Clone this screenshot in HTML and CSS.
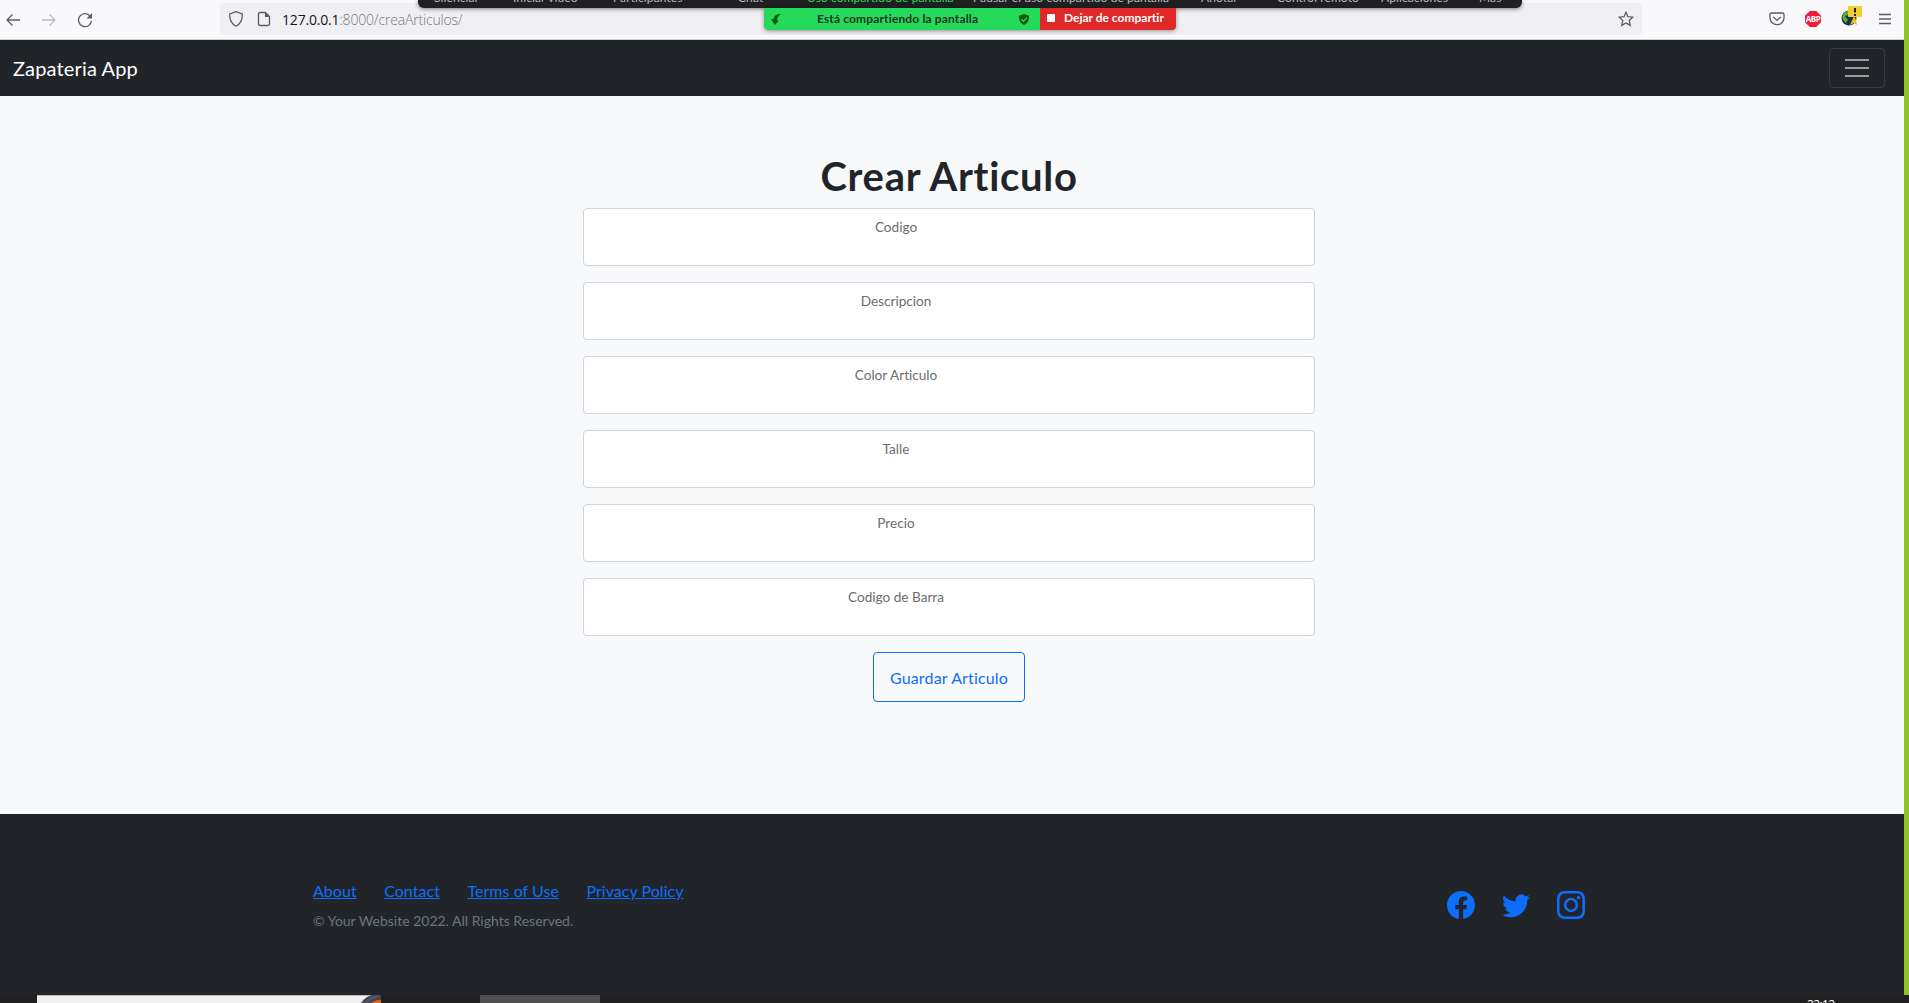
FILE: index.html
```html
<!DOCTYPE html>
<html lang="es">
<head>
<meta charset="utf-8">
<title>Zapateria App</title>
<link rel="stylesheet" href="styles.css">
</head>
<body>
<div class="screen">
  <div class="window">
    <header class="toolbar">
      <div class="nav-icons">
        <svg width="16" height="16" viewBox="0 0 16 16"><path d="M15 8H2M7.500 2.500L2 8l5.500 5.500"/></svg>
        <svg class="disabled" width="16" height="16" viewBox="0 0 16 16"><path d="M1 8h13M8.500 2.500L14 8l-5.500 5.500"/></svg>
        <svg width="16" height="16" viewBox="0 0 16 16"><path d="M13.300 4.300A6.500 6.500 0 1 0 14.500 8.800"/><path class="solid" d="M15 1v5.500H9.500z"/></svg>
      </div>
      <div class="urlbar">
        <svg width="16" height="18" viewBox="0 0 16 18"><path d="M8 1.700L14.300 4c.3 5.500-1.700 9.700-6.300 12.300C3.400 13.700 1.400 9.500 1.700 4z"/></svg>
        <svg class="page-icon" width="14" height="16" viewBox="0 0 14 16"><path d="M2.500 1.500h6l4 4v7.500q0 1.500-1.500 1.500H3q-1.500 0-1.500-1.500v-10q0-1.500 1.500-1.500z"/><path class="solid" d="M8 1.500l4.500 4.500H8z"/></svg>
        <span class="url"><b>127.0.0.1</b>:8000/creaArticulos/</span>
        <svg class="star" width="16" height="16" viewBox="0 0 16 16"><path d="M8 1.200l2 4.500 4.900.5-3.700 3.300 1.100 4.900L8 11.900l-4.300 2.500 1.100-4.900L1.100 6.200 6 5.700z"/></svg>
      </div>
      <div class="extensions">
        <svg width="16" height="16" viewBox="0 0 16 16"><path d="M2.500 2h11q1.500 0 1.500 1.500V7A7 6.700 0 0 1 1 7V3.500Q1 2 2.500 2zM4.300 6L8 9.400 11.700 6"/></svg>
        <span class="abp">ABP</span>
        <svg class="globe" width="21" height="21" viewBox="0 0 21 21"><circle cx="8" cy="12" r="7.500" fill="#14334a"/><path d="M2 8q4-4 7-3l-2 4-3 1 3 4-2 3q-5-4-3-9z" fill="#67a53a"/><path d="M9 19l4-9 2 4 1 5-3-2z" fill="#f5b821"/><rect x="7" width="14" height="11" rx="1" fill="#f2d02c"/><path d="M14 2v4.500M14 8v2" stroke="#222" stroke-width="2"/></svg>
        <svg width="14" height="14" viewBox="0 0 14 14"><path d="M1 2.500h12M1 7h12M1 11.500h12"/></svg>
      </div>
    </header>

    <nav class="navbar">
      <a class="brand">Zapateria App</a>
      <button class="toggler"><svg width="30" height="30" viewBox="0 0 30 30"><path d="M3 7h24M3 15h24M3 23h24"/></svg></button>
    </nav>

    <main class="content">
      <h1>Crear Articulo</h1>
      <form class="form">
        <div class="field"><label>Codigo</label></div>
        <div class="field"><label>Descripcion</label></div>
        <div class="field"><label>Color Articulo</label></div>
        <div class="field"><label>Talle</label></div>
        <div class="field"><label>Precio</label></div>
        <div class="field"><label>Codigo de Barra</label></div>
        <button class="save" type="button">Guardar Articulo</button>
      </form>
    </main>

    <footer class="footer">
      <div>
        <div class="links"><a>About</a><a>Contact</a><a>Terms of Use</a><a>Privacy Policy</a></div>
        <p class="copyright">© Your Website 2022. All Rights Reserved.</p>
      </div>
      <div class="social">
        <svg viewBox="0 0 16 16"><path d="M16 8.049c0-4.446-3.582-8.050-8-8.050C3.580 0-.002 3.603-.002 8.050c0 4.017 2.926 7.347 6.750 7.951v-5.625h-2.030V8.050H6.750V6.275c0-2.017 1.195-3.131 3.022-3.131.876 0 1.791.157 1.791.157v1.980h-1.009c-.993 0-1.303.621-1.303 1.258v1.510h2.218l-.354 2.326H9.250V16c3.824-.604 6.750-3.934 6.750-7.951z"/></svg>
        <svg viewBox="0 0 16 16"><path d="M5.026 15c6.038 0 9.341-5.003 9.341-9.334 0-.140 0-.282-.006-.422A6.685 6.685 0 0 0 16 3.542a6.658 6.658 0 0 1-1.889.518 3.301 3.301 0 0 0 1.447-1.817 6.533 6.533 0 0 1-2.087.793A3.286 3.286 0 0 0 7.875 6.030a9.325 9.325 0 0 1-6.767-3.429 3.289 3.289 0 0 0 1.018 4.382A3.323 3.323 0 0 1 .640 6.575v.045a3.288 3.288 0 0 0 2.632 3.218 3.203 3.203 0 0 1-.865.115 3.230 3.230 0 0 1-.614-.057 3.283 3.283 0 0 0 3.067 2.277A6.588 6.588 0 0 1 .780 13.580a6.320 6.320 0 0 1-.780-.045A9.344 9.344 0 0 0 5.026 15z"/></svg>
        <svg viewBox="0 0 16 16"><path fill-rule="evenodd" d="M4.700 0h6.600Q16 0 16 4.700v6.600Q16 16 11.300 16H4.700Q0 16 0 11.300V4.700Q0 0 4.700 0zM4.700 1.450Q1.450 1.450 1.450 4.700v6.600q0 3.250 3.250 3.250h6.600q3.250 0 3.250-3.250V4.700q0-3.250-3.250-3.250zM8 3.900a4.100 4.100 0 1 1 0 8.200 4.100 4.100 0 0 1 0-8.200zm0 1.440a2.660 2.660 0 1 0 0 5.320 2.660 2.660 0 0 0 0-5.320zM12.270 2.770a.96.96 0 1 1 0 1.920.96.96 0 0 1 0-1.920z"/></svg>
      </div>
    </footer>
  </div>

  <div class="taskbar">
    <div class="preview"><svg width="20" height="8" viewBox="0 0 20 8"><path d="M0 8Q5 1 11 0h9v8z" fill="#474756"/><path d="M4 8Q9 3 17 1" fill="none" stroke="#65657a"/><path d="M11 8q2-3 9-3v3z" fill="#f26310"/></svg></div>
    <div class="task"></div>
    <span class="clock">22:12</span>
  </div>

  <div class="meeting">
    <span class="m1">Silenciar</span><span class="m2">Iniciar video</span><span class="m3">Participantes</span><span class="m4">Chat</span><span class="m5">Uso compartido de pantalla</span><span class="m6">Pausar el uso compartido de pantalla</span><span class="m7">Anotar</span><span class="m8">Control remoto</span><span class="m9">Aplicaciones</span><span class="m10">Más</span>
  </div>
  <div class="sharing">
    <div class="sharing-on">
      <svg width="10" height="11" viewBox="0 0 10 11"><path d="M10 0Q3 0 2.500 5H0l4 6 4-4.500H6Q5.500 3 10 0z"/></svg>
      <span>Está compartiendo la pantalla</span>
      <svg width="10" height="11" viewBox="0 0 10 11"><path d="M5 0l5 1.800Q10.300 8.500 5 11-.3 8.500 0 1.800z"/><path d="M2.500 5.200l2 2 3.300-3.600" fill="none" stroke="#25da5b" stroke-width="1.300"/></svg>
    </div>
    <div class="sharing-stop"><i></i><span>Dejar de compartir</span></div>
  </div>
</div>
</body>
</html>
```
FILE: styles.css
```css
* { box-sizing: border-box; }
body { margin: 0; font-family: Lato, sans-serif; font-size: 16px; line-height: 1.5; color: #212529; font-variant-ligatures: none; }
svg { display: block; flex: none; }
button { font: inherit; font-variant-ligatures: none; background: none; }
.screen { position: relative; width: 1909px; height: 1003px; overflow: hidden; display: flex; flex-direction: column; background: #20201e; }
.window { height: 995px; display: flex; flex-direction: column; border-right: 5px solid #8fc126; background: #f8f9fa; }

.toolbar { height: 40px; flex: none; display: flex; align-items: center; background: #f9f9fb; border-bottom: 1px solid #ccc; padding: 0 12px 0 5px; }
.toolbar svg { fill: none; stroke: #5b5b66; stroke-width: 1.3; }
.toolbar .solid { fill: #5b5b66; stroke: none; }
.nav-icons { display: flex; gap: 20px; width: 215px; }
.nav-icons .disabled { stroke: #bbbbc1; }
.urlbar { width: 1422px; height: 32px; margin-top: -1px; display: flex; align-items: center; padding: 0 8px; border-radius: 4px; background: #f0f0f4; }
.page-icon { margin-left: 13px; }
.url { margin-left: 11px; padding-top: 1px; font: 14px/20px "Open Sans", sans-serif; font-weight: 300; letter-spacing: -0.18px; color: #77777c; white-space: nowrap; }
.url b { font-weight: 400; color: #15141a; }
.star { margin-left: auto; }
.extensions { display: flex; align-items: center; margin-left: auto; padding-bottom: 1px; }
.abp { width: 16px; height: 16px; margin: 0 20px; background: #ed1c3b; color: #fff; font: bold 8px/16px "Open Sans", sans-serif; letter-spacing: -0.5px; text-align: center; clip-path: polygon(30% 0, 70% 0, 100% 30%, 100% 70%, 70% 100%, 30% 100%, 0 70%, 0 30%); }
.toolbar .globe { margin: -5px 16px 0 0; stroke: none; }

.navbar { height: 56px; flex: none; display: flex; align-items: center; justify-content: space-between; padding: 0 19px 0 13px; background: #212529; }
.brand { font-size: 20px; line-height: 30px; letter-spacing: 0.15px; color: #fff; }
.toggler { width: 56px; height: 40px; padding: 0; display: grid; place-items: center; border: 1px solid rgba(255,255,255,.1); border-radius: 4px; }
.toggler path { stroke: rgba(255,255,255,.55); stroke-width: 2; }

.content { flex: 1; display: flex; flex-direction: column; align-items: center; padding: 56px 6px 0 0; }
h1 { margin: 0 0 8px; font-size: 40px; line-height: 48px; font-weight: 700; letter-spacing: 0.7px; }
.form { width: 732px; display: flex; flex-direction: column; align-items: center; gap: 16px; }
.field { width: 100%; height: 58px; padding: 8px 106px 0 0; text-align: center; background: #fff; border: 1px solid #ced4da; border-radius: 4px; }
.field label { display: block; font-size: 13.6px; line-height: 20px; color: #6b6d6f; }
.save { width: 152px; height: 50px; padding: 2px 0 0; border: 1px solid #0d6efd; border-radius: 4px; color: #0d6efd; letter-spacing: 0.16px; white-space: nowrap; }

.footer { height: 181px; display: flex; justify-content: space-between; align-items: flex-start; padding: 65px 319px 0 313px; background: #212529; }
.links { display: flex; gap: 27.500px; height: 24px; margin-bottom: 7px; color: #0d6efd; letter-spacing: 0.04px; }
.links a { text-decoration: underline; }
.copyright { margin: 0; font-size: 14px; line-height: 21px; color: #6c757d; }
.social { display: flex; gap: 27px; padding-top: 12px; }
.social svg { width: 28px; height: 28px; fill: #0d6efd; }

.taskbar { height: 8px; display: flex; overflow: hidden; background: #20201e; }
.preview { width: 344px; margin-left: 37px; display: flex; justify-content: flex-end; background: #f0f0f0; border-top: 1px solid #bbb; }
.preview svg { margin-top: -1px; }
.task { width: 120px; margin-left: 99px; background: #50504e; }
.clock { margin-left: 1207px; padding-top: 2px; color: #fff; font: 12px/16px "Open Sans", sans-serif; letter-spacing: -0.6px; }

.meeting { position: absolute; left: 418px; top: 0; width: 1104px; height: 8px; overflow: hidden; border-radius: 0 0 6px 6px; background: #1e2021; box-shadow: 0 1px 4px rgba(0,0,0,.5); color: #b8babb; font: 12px/16px Lato, sans-serif; font-variant-ligatures: none; letter-spacing: 0.1px; white-space: nowrap; }
.meeting span { position: absolute; top: -10px; }
.m1 { left: 16px; } .m2 { left: 95px; } .m3 { left: 195px; } .m4 { left: 320px; }
.m5 { left: 389px; color: #25da5b; } .m6 { left: 555px; } .m7 { left: 783px; } .m8 { left: 859px; } .m9 { left: 963px; } .m10 { left: 1061px; }
.sharing { position: absolute; left: 764px; top: 8px; width: 412px; height: 22px; display: flex; overflow: visible; border-radius: 0 0 4px 4px; box-shadow: 0 1px 4px rgba(0,0,0,.4); font: bold 12px/20px Lato, sans-serif; font-variant-ligatures: none; white-space: nowrap; }
.sharing-on { width: 276px; display: flex; align-items: center; padding: 0 11px 0 7px; background: #25da5b; color: #1c3324; border-bottom-left-radius: 4px; }
.sharing-on svg { fill: #0d5a12; }
.sharing-on span { margin: -1px auto 0 36px; letter-spacing: 0.14px; }
.sharing-stop { width: 136px; display: flex; align-items: center; padding: 0 0 3px 7px; gap: 9px; background: #e02828; color: #fff; border-bottom-right-radius: 4px; }
.sharing-stop i { width: 8px; height: 8px; border-radius: 1px; background: #fff; }
```
